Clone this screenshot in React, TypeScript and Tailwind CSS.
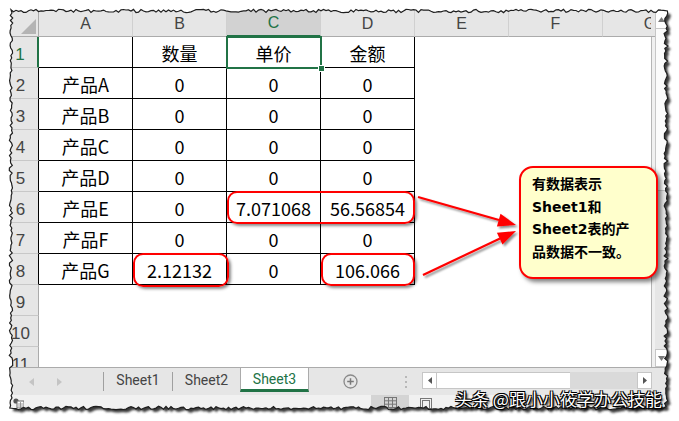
import React from "react";

const CJK = "[font-family:'Noto_Sans_CJK_SC','Noto_Sans',sans-serif]";
const CALLOUT = "[font-family:'DejaVu_Sans','Noto_Sans_CJK_SC',sans-serif]";
const LAT = "[font-family:'Liberation_Sans',Arial,sans-serif]";

const data: string[][] = [
  ["", "数量", "单价", "金额"],
  ["产品A", "0", "0", "0"],
  ["产品B", "0", "0", "0"],
  ["产品C", "0", "0", "0"],
  ["产品D", "0", "0", "0"],
  ["产品E", "0", "7.071068", "56.56854"],
  ["产品F", "0", "0", "0"],
  ["产品G", "2.12132", "0", "106.066"],
];

const cols = ["A", "B", "C", "D", "E", "F"];

function makeJag(): string {
  let s = 987654;
  const rnd = () => {
    s = (s * 1103515245 + 12345) & 0x7fffffff;
    return s / 0x7fffffff;
  };
  const L = 11, T = 11, R = 666, B = 408;
  const pts: [number, number][] = [];
  for (let x = L; x < R; x += 2.5) pts.push([x, T + (rnd() - 0.5) * 3.4]);
  for (let y = T; y < B; y += 2.5) pts.push([R + (rnd() - 0.5) * 3.8, y]);
  for (let x = R; x > L; x -= 2.5) pts.push([x, B + (rnd() - 0.5) * 3.4]);
  for (let y = B; y > T; y -= 2.5) pts.push([L + (rnd() - 0.5) * 3.4, y]);
  return "M" + pts.map((p) => p[0].toFixed(1) + " " + p[1].toFixed(1)).join("L") + "Z";
}

const jag = makeJag();

function TornEdge() {
  const outer = "M0 0H679V421H0Z";
  return (
    <svg className="absolute left-0 top-0 pointer-events-none" width="679" height="421">
      <defs>
        <clipPath id="outside">
          <path d={outer + jag} clipRule="evenodd" />
        </clipPath>
        <filter id="blr" x="-5%" y="-5%" width="110%" height="110%">
          <feGaussianBlur stdDeviation="1.3" />
        </filter>
      </defs>
      <path d={outer + jag} fill="#ffffff" fillRule="evenodd" />
      <g clipPath="url(#outside)">
        <path d={jag} transform="translate(3,3)" fill="#3a3a3a" filter="url(#blr)" />
      </g>
      <path d={jag} fill="none" stroke="#1e1e1e" strokeWidth="1.2" />
    </svg>
  );
}

function HeaderRow() {
  return (
    <div className={`flex h-[27px] shrink-0 bg-[#e6e6e6] ${LAT}`}>
      <div className="relative w-[29px] shrink-0 border-r border-b border-[#ababab]">
        <svg className="absolute left-0 top-0" width="29" height="27">
          <polygon points="26,9 26,24 11,24" fill="#b4b4b4" />
        </svg>
      </div>
      {cols.map((c) => {
        const sel = c === "C";
        return (
          <div
            key={c}
            className={`flex w-[94px] shrink-0 items-end justify-center pb-[2px] text-[16px] leading-[20px] border-r border-[#d0d0d0] ${
              sel ? "bg-[#d2d2d2] text-[#217346] border-b-2 border-b-[#217346]" : "text-[#444] border-b border-b-[#ababab]"
            }`}
          >
            {c}
          </div>
        );
      })}
      <div className="w-[48px] shrink-0 overflow-hidden border-b border-[#ababab]">
        <div className="flex w-[94px] items-end justify-center pb-[2px] h-full text-[16px] leading-[20px] text-[#444]">G</div>
      </div>
      <div className="w-[4px] shrink-0 border-b border-[#ababab]" />
    </div>
  );
}

function BodyRow({ r }: { r: number }) {
  const inTable = r <= 8;
  const vals = inTable ? data[r - 1] : ["", "", "", ""];
  const hdrBorder = r === 1 ? "border-r-2 border-r-[#217346] text-[#217346]" : inTable ? "border-r border-r-black text-[#444]" : "border-r border-r-[#ababab] text-[#444]";
  return (
    <div className="flex h-[31px] shrink-0">
      <div
        className={`flex w-[29px] shrink-0 items-end justify-center pr-[7px] pb-[1px] bg-[#e6e6e6] border-b border-b-[#c8c8c8] text-[17px] leading-[22px] ${LAT} ${hdrBorder}`}
      >
        {r}
      </div>
      {vals.map((v, i) => (
        <div
          key={i}
          className={`flex w-[94px] shrink-0 items-end justify-center pb-[3px] text-[18px] leading-[22px] text-black ${CJK} ${
            inTable ? "border-r border-b border-black" : ""
          }`}
        >
          {v}
        </div>
      ))}
      <div className="w-[94px] shrink-0" />
      <div className="w-[94px] shrink-0" />
      <div className="w-[48px] shrink-0" />
      <div className="w-[4px] shrink-0 bg-[#f0f0f0] border-l border-[#b5b5b5]" />
    </div>
  );
}

function VScroll() {
  return (
    <div className="flex w-[13px] shrink-0 flex-col bg-[#e6e6e6]">
      <div className="flex h-[19px] items-center justify-center border border-[#c6c6c6] bg-white">
        <svg width="7" height="5"><polygon points="3.5,0 7,5 0,5" fill="#7a7a7a" /></svg>
      </div>
      <div className="h-[162px] border-x border-b border-[#c6c6c6] bg-[#fbfbfb]" />
      <div className="flex-1" />
      <div className="flex h-[18px] items-center justify-center border border-[#c6c6c6] bg-white">
        <svg width="7" height="5"><polygon points="0,0 7,0 3.5,5" fill="#7a7a7a" /></svg>
      </div>
    </div>
  );
}

function TabBar() {
  const tabText = "[font-family:Roboto,'Liberation_Sans',sans-serif] text-[14px]";
  return (
    <div className="flex h-[28px] shrink-0 items-start border-t border-[#ababab] bg-[#e6e6e6]">
      <div className="flex h-[27px] w-[93px] shrink-0 items-center">
        <svg className="ml-[19px]" width="5" height="8"><polygon points="5,0 5,8 0,4" fill="#c4c4c4" /></svg>
        <svg className="ml-[23px]" width="5" height="8"><polygon points="0,0 0,8 5,4" fill="#c4c4c4" /></svg>
      </div>
      <div className="mt-[4px] h-[19px] w-px shrink-0 bg-[#a0a0a0]" />
      <div className={`flex h-[24px] w-[68px] shrink-0 items-center justify-center text-[#444] ${tabText}`}>Sheet1</div>
      <div className="mt-[4px] h-[19px] w-px shrink-0 bg-[#a0a0a0]" />
      <div className={`flex h-[24px] w-[67px] shrink-0 items-center justify-center text-[#444] ${tabText}`}>Sheet2</div>
      <div
        className={`flex h-[24px] w-[69px] shrink-0 items-center justify-center border-x border-[#ababab] border-b-[3px] border-b-[#217346] bg-white pt-[2px] text-[#217346] ${tabText}`}
      >
        Sheet3
      </div>
      <div className="w-[34px] shrink-0" />
      <div className="flex h-[27px] items-center">
        <svg width="15" height="15" viewBox="0 0 15 15">
          <circle cx="7.5" cy="7.5" r="6.5" fill="none" stroke="#8a8a8a" strokeWidth="1.3" />
          <path d="M7.5 4.2V10.8M4.2 7.5H10.8" stroke="#7a7a7a" strokeWidth="1.5" />
        </svg>
      </div>
      <div className="w-[47px] shrink-0" />
      <div className="flex h-[27px] items-center">
        <svg width="2" height="12"><rect x="0" y="0" width="2" height="2" fill="#b8b8b8" /><rect x="0" y="5" width="2" height="2" fill="#b8b8b8" /><rect x="0" y="10" width="2" height="2" fill="#b8b8b8" /></svg>
      </div>
      <div className="w-[15px] shrink-0" />
      <div className="mt-[4px] flex h-[17px] w-[230px] shrink-0">
        <div className="flex w-[15px] items-center justify-center border border-[#c6c6c6] bg-white">
          <svg width="4" height="7"><polygon points="4,0 4,7 0,3.5" fill="#555" /></svg>
        </div>
        <div className="w-[133px] border-y border-[#c6c6c6] bg-white" />
        <div className="flex-1 bg-[#dadada]" />
        <div className="flex w-[15px] items-center justify-center border border-[#c6c6c6] bg-white">
          <svg width="4" height="7"><polygon points="0,0 0,7 4,3.5" fill="#555" /></svg>
        </div>
      </div>
    </div>
  );
}

function StatusBar() {
  return (
    <div className="flex h-[15px] shrink-0 items-start bg-[#f1f1f1]">
      <div className="ml-[3px] mt-[3px]">
        <svg width="11" height="10" viewBox="0 0 11 10">
          <circle cx="3" cy="3" r="2.6" fill="#555" />
          <rect x="4" y="3" width="7" height="7" fill="#fff" stroke="#666" strokeWidth="1" />
          <path d="M5 6H10M5 8H10M7.5 4V10" stroke="#888" strokeWidth="0.8" />
        </svg>
      </div>
      <div className="ml-[347px] flex h-[15px] w-[38px] items-start justify-center bg-[#d4d4d4] pt-[2px]">
        <svg width="13" height="11" viewBox="0 0 13 11">
          <rect x="0.5" y="0.5" width="12" height="10" fill="none" stroke="#777" />
          <path d="M4.5 0.5V10.5M8.5 0.5V10.5M0.5 3.8H12.5M0.5 7.2H12.5" stroke="#777" strokeWidth="1" />
        </svg>
      </div>
      <div className="ml-[11px] pt-[3px]">
        <svg width="12" height="11" viewBox="0 0 12 11">
          <rect x="0.5" y="0.5" width="11" height="10" fill="none" stroke="#777" />
          <rect x="2.5" y="2.5" width="7" height="8" fill="none" stroke="#777" />
        </svg>
      </div>
    </div>
  );
}

export default function App() {
  const rowsN = Array.from({ length: 11 }, (_, i) => i + 1);
  return (
    <div className="relative h-[421px] w-[679px] overflow-hidden bg-white">
      <div className="ml-[10px] mt-[10px] flex h-[400px] w-[658px] flex-col bg-white">
        <div className="flex h-[357px] shrink-0">
          <div className="flex w-[645px] shrink-0 flex-col">
            <HeaderRow />
            <div className="h-[330px] overflow-hidden">
              {rowsN.map((r) => (
                <BodyRow key={r} r={r} />
              ))}
            </div>
          </div>
          <VScroll />
        </div>
        <TabBar />
        <StatusBar />
      </div>

      {/* selection of C1 */}
      <div className="absolute left-[226px] top-[36px] h-[33px] w-[96px] border-2 border-[#217346]" />
      <div className="absolute left-[318px] top-[65px] h-[7px] w-[7px] border border-white bg-[#217346]" />

      {/* red highlight boxes */}
      <div className="absolute left-[227px] top-[191px] h-[33px] w-[188px] rounded-[10px] border-2 border-[#ff0000] shadow-[2px_2px_3px_rgba(0,0,0,0.45)]" />
      <div className="absolute left-[133px] top-[253px] h-[34px] w-[96px] rounded-[10px] border-2 border-[#ff0000] shadow-[2px_2px_3px_rgba(0,0,0,0.45)]" />
      <div className="absolute left-[321px] top-[253px] h-[33px] w-[94px] rounded-[10px] border-2 border-[#ff0000] shadow-[2px_2px_3px_rgba(0,0,0,0.45)]" />

      {/* arrows */}
      <svg className="absolute left-0 top-0 pointer-events-none" width="679" height="421">
        <defs>
          <filter id="ash" x="-10%" y="-10%" width="130%" height="130%">
            <feDropShadow dx="2" dy="2" stdDeviation="1.2" floodColor="#000" floodOpacity="0.45" />
          </filter>
        </defs>
        <g filter="url(#ash)">
          <line x1="418" y1="197" x2="499" y2="220" stroke="#ff0000" strokeWidth="2.2" />
          <polygon points="516,225 496.9,226.4 500.5,213.8" fill="#ff0000" />
          <line x1="423" y1="275" x2="500" y2="238.5" stroke="#ff0000" strokeWidth="2.2" />
          <polygon points="516,231 502.5,244.6 496.9,232.8" fill="#ff0000" />
        </g>
      </svg>

      {/* callout */}
      <div
        className={`absolute left-[519px] top-[166px] h-[113px] w-[139px] rounded-[14px] border-2 border-[#ff0000] bg-[#ffffcc] pl-[11px] pt-[5px] text-[14px] font-bold leading-[22.5px] text-black shadow-[3px_3px_4px_rgba(0,0,0,0.5)] ${CALLOUT}`}
      >
        <div>有数据表示</div>
        <div>Sheet1和</div>
        <div>Sheet2表的产</div>
        <div>品数据不一致。</div>
      </div>

      <TornEdge />

      {/* watermark */}
      <div
        className={`absolute left-[455px] top-[387px] whitespace-nowrap text-[17px] leading-[24px] text-white ${CJK} [text-shadow:1px_1px_0_#000,-1px_-1px_0_#000,1px_-1px_0_#000,-1px_1px_0_#000,2px_2px_2px_#000]`}
      >
        头条 @跟小小筱学办公技能
      </div>
    </div>
  );
}
